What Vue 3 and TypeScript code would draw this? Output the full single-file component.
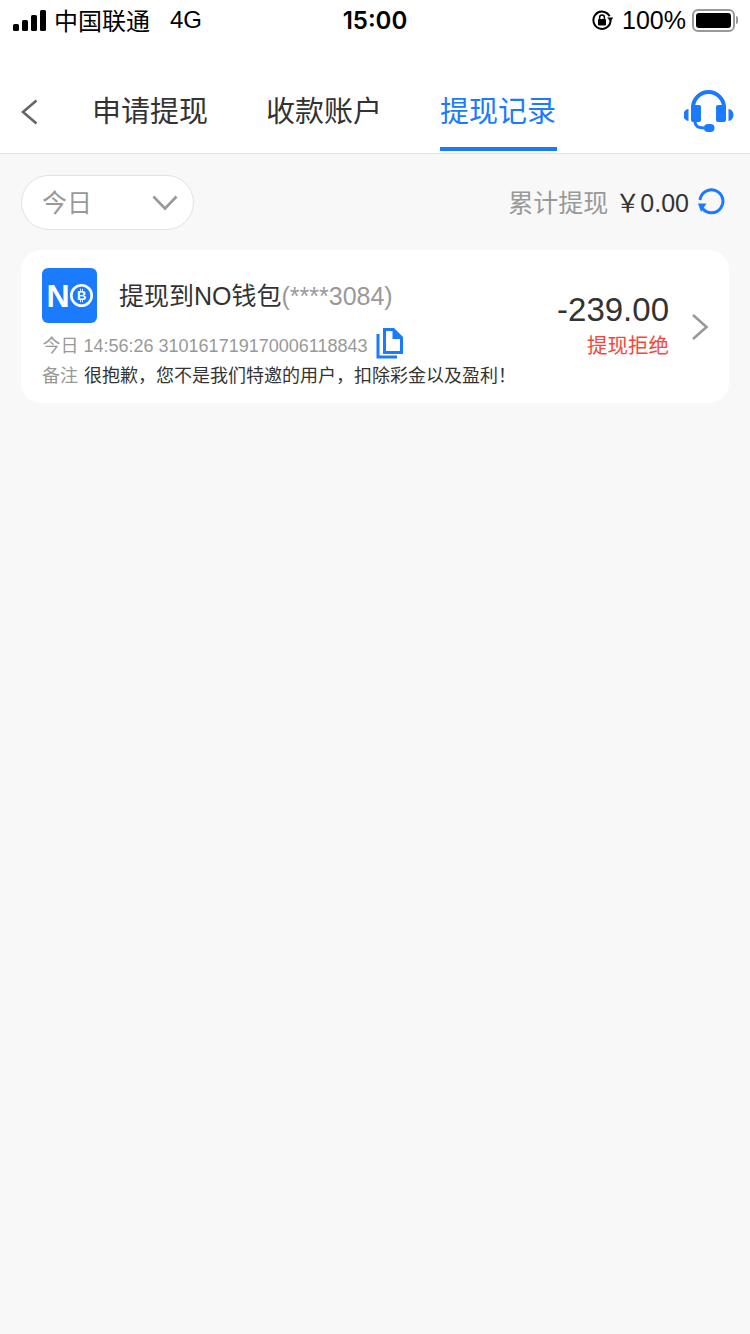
<script setup lang="ts">
import { ref } from 'vue'

const tabs = ref(['申请提现', '收款账户', '提现记录'])
const activeTab = ref(2)

const record = ref({
  title: '提现到NO钱包',
  account: '(****3084)',
  meta: '今日 14:56:26 310161719170006118843',
  remark: '很抱歉，您不是我们特邀的用户，扣除彩金以及盈利！',
  amount: '-239.00',
  status: '提现拒绝'
})
</script>

<template>
  <main class="page">
    <header class="status-bar">
      <div class="status-left">
        <div class="signal">
          <i class="s1"></i><i class="s2"></i><i class="s3"></i><i class="s4"></i>
        </div>
        <span class="carrier">中国联通</span>
        <span class="net">4G</span>
      </div>
      <div class="status-time">15:00</div>
      <div class="status-right">
        <svg class="lock" width="22" height="22" viewBox="0 0 22 22">
          <path d="M18.6 7.2A8.6 8.6 0 1 0 19.6 11" fill="none" stroke="#000" stroke-width="2" />
          <path d="M16.2 9.4h6.2l-3.1-3.8z" fill="#000" transform="rotate(180 19.3 9)" />
          <rect x="7" y="10" width="8" height="6.4" rx="1" fill="#000" />
          <path d="M8.6 10V8.4a2.4 2.4 0 0 1 4.8 0V10" fill="none" stroke="#000" stroke-width="1.5" />
        </svg>
        <span class="percent">100%</span>
        <div class="battery"><div class="battery-fill"></div></div>
        <div class="battery-cap"></div>
      </div>
    </header>

    <nav class="nav">
      <svg class="back" width="18" height="26" viewBox="0 0 18 26">
        <path d="M16.500 1.500 3 13 16.500 24.500" fill="none" stroke="#666" stroke-width="2.600" />
      </svg>
      <div class="tabs">
        <div
          v-for="(tab, i) in tabs"
          :key="tab"
          class="tab"
          :class="{ active: i === activeTab }"
        >
          {{ tab }}
        </div>
      </div>
      <svg class="service" width="50" height="43" viewBox="0 0 50 43">
        <path d="M9 19v-1.500a15.500 15.500 0 0 1 31 0V19" fill="none" stroke="#1a7bff" stroke-width="4" />
        <rect x="7" y="15" width="10" height="17" rx="2" fill="#1a7bff" />
        <rect x="32" y="15" width="10" height="17" rx="2" fill="#1a7bff" />
        <path d="M4.500 19v12a5 6 0 0 1 0-12zM44.500 19v12a5 6 0 0 0 0-12z" fill="#1a7bff" />
        <path d="M11 32c0 4 3 6 10 6" fill="none" stroke="#1a7bff" stroke-width="3" />
        <rect x="20" y="34" width="10.500" height="8" rx="4" fill="#1a7bff" />
      </svg>
    </nav>

    <section class="filter-row">
      <div class="select">
        <span class="select-text">今日</span>
        <svg width="26" height="16" viewBox="0 0 26 16">
          <path d="M1.500 1.500 13 13.500 24.500 1.500" fill="none" stroke="#999" stroke-width="2.600" />
        </svg>
      </div>
      <div class="total">
        <span class="total-label">累计提现</span>
        <span class="total-value">￥0.00</span>
        <svg class="refresh" width="28" height="28" viewBox="0 0 28 28">
          <path d="M5.500 21.500A11.500 11.500 0 1 0 3 13" fill="none" stroke="#1a7bff" stroke-width="3" />
          <path d="M1 16.500h8.500L4 25z" fill="#1a7bff" />
        </svg>
      </div>
    </section>

    <section class="card">
      <div class="card-main">
        <div class="card-head">
          <div class="logo">
            <span class="logo-n">N</span>
            <svg width="23" height="23" viewBox="0 0 23 23">
              <circle cx="11.500" cy="11.500" r="10.200" fill="none" stroke="#fff" stroke-width="2.600" />
              <text x="11.700" y="16.200" text-anchor="middle" class="logo-b">B</text>
              <path d="M10.500 4.800v2M12.500 4.800v2M10.500 16.200v2M12.500 16.200v2" stroke="#fff" stroke-width="1" />
            </svg>
          </div>
          <div class="title">
            {{ record.title }}<span class="account">{{ record.account }}</span>
          </div>
        </div>
        <div class="meta">
          <span>{{ record.meta }}</span>
          <svg width="28" height="31" viewBox="0 0 28 31">
            <path d="M2 6v23h19" fill="none" stroke="#1a7bff" stroke-width="3" />
            <path d="M7 0h11l9 9v17H7z" fill="#1a7bff" />
            <path d="M10 3h6.500v8H24v12H10z" fill="#fff" />
          </svg>
        </div>
        <div class="remark">
          <span class="remark-label">备注</span>
          <span class="remark-text">{{ record.remark }}</span>
        </div>
      </div>
      <div class="card-side">
        <div class="amount">{{ record.amount }}</div>
        <div class="state">{{ record.status }}</div>
      </div>
      <svg class="arrow" width="18" height="28" viewBox="0 0 18 28">
        <path d="M2 2 15.500 14 2 26" fill="none" stroke="#999" stroke-width="2.600" />
      </svg>
    </section>
  </main>
</template>

<style>
html,
body {
  margin: 0;
  background: #f8f8f8;
}
</style>

<style scoped>
.page {
  width: 750px;
  min-height: 1334px;
  background: #f8f8f8;
  font-family: 'Liberation Sans', 'Noto Sans CJK SC', sans-serif;
  color: #333;
}

.status-bar {
  height: 40px;
  background: #fff;
  display: grid;
  grid-template-columns: 1fr auto 1fr;
  align-items: center;
  color: #000;
}

.status-left {
  display: flex;
  align-items: center;
  padding-left: 13px;
}

.signal {
  display: flex;
  align-items: flex-end;
  gap: 3px;
  height: 22px;
  margin-right: 8px;
}

.signal i {
  display: block;
  width: 6px;
  background: #000;
  border-radius: 1.500px;
}

.s1 { height: 7px; }
.s2 { height: 11px; }
.s3 { height: 16px; }
.s4 { height: 21px; }

.carrier {
  font-size: 24px;
  margin-top: -2px;
}

.net {
  font-size: 24px;
  margin-left: 20px;
}

.status-time {
  font-family: Inter, 'Liberation Sans', sans-serif;
  font-size: 24px;
  font-weight: 600;
}

.status-right {
  display: flex;
  align-items: center;
  justify-content: flex-end;
  padding-right: 12px;
}

.percent {
  font-size: 25px;
  margin: 0 6px 0 9px;
}

.battery {
  box-sizing: border-box;
  width: 43px;
  height: 23px;
  border: 2px solid #999;
  border-radius: 6px;
  padding: 2px;
}

.battery-fill {
  height: 100%;
  background: #000;
  border-radius: 3px;
}

.battery-cap {
  width: 2px;
  height: 8px;
  background: #999;
  border-radius: 0 2px 2px 0;
  margin-left: 1px;
}

.nav {
  box-sizing: border-box;
  height: 114px;
  background: #fff;
  border-bottom: 1px solid #e2e2e2;
  display: flex;
  align-items: flex-end;
  padding-left: 20px;
}

.back {
  margin-bottom: 28px;
}

.tabs {
  display: flex;
  gap: 57px;
  margin-left: 53.500px;
}

.tab {
  font-size: 29px;
  line-height: 40px;
  padding: 0 0.500px 15px;
  border-bottom: 4px solid transparent;
  margin-bottom: 2px;
  color: #333;
}

.tab.active {
  color: #1a7bff;
  border-bottom-color: #1a7bff;
}

.service {
  margin-left: auto;
  margin-right: 16px;
  margin-bottom: 20px;
}

.filter-row {
  display: flex;
  align-items: center;
  justify-content: space-between;
  padding: 21px 25px 0 21px;
}

.select {
  box-sizing: border-box;
  width: 173px;
  height: 55px;
  background: #fff;
  border: 1px solid #e2e2e2;
  border-radius: 28px;
  display: flex;
  align-items: center;
  justify-content: space-between;
  padding: 0 15px 0 20px;
  font-size: 25px;
  color: #999;
}

.select-text {
  margin-top: -4px;
}

.total {
  display: flex;
  align-items: center;
  padding-bottom: 4px;
}

.total-label {
  font-size: 25px;
  color: #999;
}

.total-value {
  font-size: 25px;
  color: #333;
  margin-left: 7px;
}

.refresh {
  margin-left: 8px;
}

.card {
  box-sizing: border-box;
  margin: 20px 21px 0;
  height: 153px;
  background: #fff;
  border-radius: 20px;
  display: flex;
  align-items: flex-start;
  padding: 18px 20px 0 21px;
}

.card-main {
  flex: 1;
  min-width: 0;
}

.card-head {
  display: flex;
  align-items: center;
}

.logo {
  width: 55px;
  height: 55px;
  border-radius: 6px;
  background: #1a7bff;
  display: flex;
  align-items: center;
  justify-content: center;
  color: #fff;
}

.logo-n {
  font-size: 32px;
  font-weight: 700;
  line-height: 1;
}

.logo-b {
  font-size: 13px;
  font-weight: 700;
  fill: #fff;
}

.title {
  margin-left: 22px;
  margin-bottom: 4px;
  font-size: 25px;
  color: #333;
}

.account {
  color: #999;
}

.meta {
  display: flex;
  align-items: center;
  height: 36px;
  margin-top: 3px;
  font-size: 18px;
  color: #999;
  padding-left: 0.500px;
}

.meta svg {
  margin-left: 8.500px;
  margin-top: -2px;
}

.remark {
  font-size: 18px;
  line-height: 28px;
}

.remark-label {
  color: #999;
  margin-right: 6px;
}

.card-side {
  text-align: right;
  margin-top: 22px;
  margin-right: 22px;
}

.amount {
  font-size: 33px;
  line-height: 40px;
  color: #333;
}

.state {
  font-size: 20.500px;
  line-height: 32px;
  color: #f5483b;
}

.arrow {
  margin-top: 45px;
}
</style>
